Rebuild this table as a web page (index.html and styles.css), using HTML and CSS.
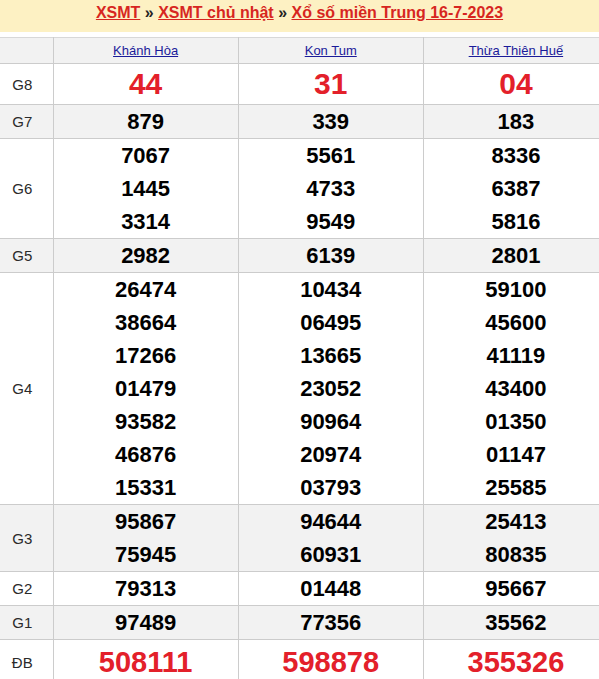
FILE: index.html
```html
<!DOCTYPE html>
<html lang="vi">
<head>
<meta charset="utf-8">
<title>XSMT 16-7-2023</title>
<link rel="stylesheet" href="styles.css">
</head>
<body>
<div class="page">
  <div class="title">
    <a href="#">XSMT</a> » <a href="#">XSMT chủ nhật</a> » <a href="#">Xổ số miền Trung 16-7-2023</a>
  </div>
  <div class="wrap">
    <table class="kq">
      <colgroup>
        <col class="c-label"><col class="c-prov"><col class="c-prov"><col class="c-prov">
      </colgroup>
      <tr class="head">
        <td></td>
        <td><a href="#">Khánh Hòa</a></td>
        <td><a href="#">Kon Tum</a></td>
        <td><a href="#">Thừa Thiên Huế</a></td>
      </tr>
      <tr class="g8">
        <td class="lbl">G8</td>
        <td><div class="n red big">44</div></td>
        <td><div class="n red big">31</div></td>
        <td><div class="n red big">04</div></td>
      </tr>
      <tr class="alt">
        <td class="lbl">G7</td>
        <td><div class="n">879</div></td>
        <td><div class="n">339</div></td>
        <td><div class="n">183</div></td>
      </tr>
      <tr>
        <td class="lbl">G6</td>
        <td><div class="n">7067</div><div class="n">1445</div><div class="n">3314</div></td>
        <td><div class="n">5561</div><div class="n">4733</div><div class="n">9549</div></td>
        <td><div class="n">8336</div><div class="n">6387</div><div class="n">5816</div></td>
      </tr>
      <tr class="alt">
        <td class="lbl">G5</td>
        <td><div class="n">2982</div></td>
        <td><div class="n">6139</div></td>
        <td><div class="n">2801</div></td>
      </tr>
      <tr>
        <td class="lbl">G4</td>
        <td><div class="n">26474</div><div class="n">38664</div><div class="n">17266</div><div class="n">01479</div><div class="n">93582</div><div class="n">46876</div><div class="n">15331</div></td>
        <td><div class="n">10434</div><div class="n">06495</div><div class="n">13665</div><div class="n">23052</div><div class="n">90964</div><div class="n">20974</div><div class="n">03793</div></td>
        <td><div class="n">59100</div><div class="n">45600</div><div class="n">41119</div><div class="n">43400</div><div class="n">01350</div><div class="n">01147</div><div class="n">25585</div></td>
      </tr>
      <tr class="alt">
        <td class="lbl">G3</td>
        <td><div class="n">95867</div><div class="n">75945</div></td>
        <td><div class="n">94644</div><div class="n">60931</div></td>
        <td><div class="n">25413</div><div class="n">80835</div></td>
      </tr>
      <tr>
        <td class="lbl">G2</td>
        <td><div class="n">79313</div></td>
        <td><div class="n">01448</div></td>
        <td><div class="n">95667</div></td>
      </tr>
      <tr class="alt">
        <td class="lbl">G1</td>
        <td><div class="n">97489</div></td>
        <td><div class="n">77356</div></td>
        <td><div class="n">35562</div></td>
      </tr>
      <tr class="db">
        <td class="lbl">ĐB</td>
        <td><div class="n red db-n">508111</div></td>
        <td><div class="n red db-n">598878</div></td>
        <td><div class="n red db-n">355326</div></td>
      </tr>
    </table>
  </div>
</div>
</body>
</html>
```
FILE: styles.css
```css
html, body {
  margin: 0;
  padding: 0;
  background: #fff;
}
body {
  font-family: "Liberation Sans", Arial, sans-serif;
  overflow: hidden;
}
.page {
  width: 599px;
  overflow: hidden;
}
.title {
  background: #fdf1c3;
  height: 32px;
  line-height: 26px;
  text-align: center;
  font-size: 16px;
  font-weight: bold;
  color: #222;
}
.title a {
  color: #d7261f;
  text-decoration: underline;
}
.wrap {
  padding-top: 5px;
}
.kq {
  width: 609px;
  table-layout: fixed;
  border-collapse: collapse;
}
.c-label { width: 53px; }
.c-prov { width: 185px; }
.kq td {
  border: 1px solid #cccccc;
  text-align: center;
  padding: 0;
  vertical-align: middle;
}
.kq tr:first-child td { border-top-color: #d8d8d8; }
.kq td:first-child { border-left: none; }
.head td {
  background: #f2f2f2;
  height: 25px;
  font-size: 13px;
}
.head a {
  color: #1b1b9a;
  text-decoration: underline;
}
.alt td { background: #f2f2f2; }
.kq td.lbl {
  font-size: 15px;
  color: #2a2a2a;
  padding-right: 8px;
}
.n {
  font-size: 22px;
  font-weight: bold;
  color: #000;
  line-height: 33px;
}
.red { color: #e3202a; }
.big {
  font-size: 30px;
  line-height: 40px;
}
.db-n {
  font-size: 29px;
  line-height: 44px;
}
```
